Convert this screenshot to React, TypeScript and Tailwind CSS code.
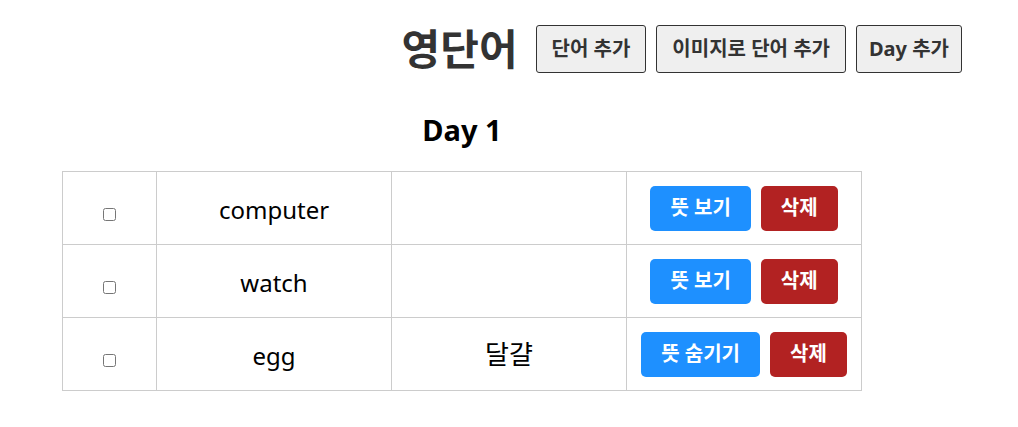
import { useState } from 'react';

interface Word {
  id: number;
  eng: string;
  kor: string;
}

const words: Word[] = [
  { id: 1, eng: 'computer', kor: '컴퓨터' },
  { id: 2, eng: 'watch', kor: '시계' },
  { id: 3, eng: 'egg', kor: '달걀' },
];

function WordRow({ word, initialShow }: { word: Word; initialShow: boolean }) {
  const [isShow, setIsShow] = useState(initialShow);
  const [isDone, setIsDone] = useState(false);

  return (
    <tr>
      <td className="w-[94px] h-[73px] border border-[#ccc] text-center">
        <input
          type="checkbox"
          checked={isDone}
          onChange={() => setIsDone(!isDone)}
          className="align-[-7px]"
        />
      </td>
      <td className="h-[73px] border border-[#ccc] text-center text-[24px] pt-[3px]">{word.eng}</td>
      <td className="h-[73px] border border-[#ccc] text-center text-[26px]">{isShow && word.kor}</td>
      <td className="h-[73px] border border-[#ccc] text-center">
        <div className="flex justify-center gap-[10px]">
          <button
            onClick={() => setIsShow(!isShow)}
            className="h-[45px] px-[20px] rounded-[5px] bg-[#1e90ff] text-white text-[20px] font-bold"
          >
            {isShow ? '뜻 숨기기' : '뜻 보기'}
          </button>
          <button className="h-[45px] px-[20px] rounded-[5px] bg-[#b22222] text-white text-[20px] font-bold">
            삭제
          </button>
        </div>
      </td>
    </tr>
  );
}

export default function App() {
  return (
    <div
      className="w-[906px] mx-auto text-black"
      style={{ fontFamily: '"Noto Sans", "Noto Sans CJK KR", sans-serif' }}
    >
      <div className="flex justify-end items-center pt-[25px]">
        <h1 className="text-[42px] font-bold text-[#333] mr-[18px] leading-[48px]">영단어</h1>
        <div className="flex gap-[10px]">
          <button className="h-[48px] px-[15px] border border-[#333] rounded-[3px] bg-[#efefef] text-[#333] text-[20px] font-bold">
            단어 추가
          </button>
          <button className="h-[48px] px-[15px] border border-[#333] rounded-[3px] bg-[#efefef] text-[#333] text-[20px] font-bold">
            이미지로 단어 추가
          </button>
          <button className="h-[48px] px-[12px] border border-[#333] rounded-[3px] bg-[#efefef] text-[#333] text-[20px] font-bold">
            Day 추가
          </button>
        </div>
      </div>
      <div className="pl-[6px]">
        <h2 className="w-[800px] text-center text-[29px] font-bold mt-[36px] leading-[42px]">Day 1</h2>
        <table className="w-[800px] mt-[20px] border-collapse table-fixed">
          <colgroup>
            <col className="w-[94px]" />
            <col />
            <col />
            <col />
          </colgroup>
          <tbody>
            {words.map((w) => (
              <WordRow key={w.id} word={w} initialShow={w.id === 3} />
            ))}
          </tbody>
        </table>
      </div>
    </div>
  );
}
